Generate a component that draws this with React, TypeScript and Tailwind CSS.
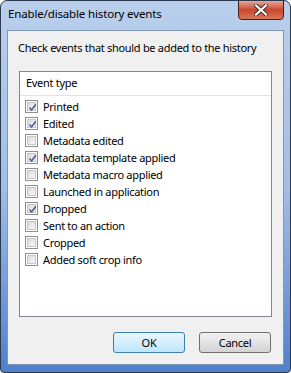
import React from "react";

const events = [
  { label: "Printed", checked: true },
  { label: "Edited", checked: true },
  { label: "Metadata edited", checked: false },
  { label: "Metadata template applied", checked: true },
  { label: "Metadata macro applied", checked: false },
  { label: "Launched in application", checked: false },
  { label: "Dropped", checked: true },
  { label: "Sent to an action", checked: false },
  { label: "Cropped", checked: false },
  { label: "Added soft crop info", checked: false },
];

function CheckBox({ checked }: { checked: boolean }) {
  return (
    <div className="w-[13px] h-[13px] border border-[#8e8f8f] bg-white p-[1px] shrink-0">
      <div className="relative w-full h-full border border-[#c6c6c6] bg-gradient-to-br from-[#dadada] to-[#f8f8f8]">
        {checked && (
          <svg className="absolute left-[0px] top-[0px]" width="9" height="9" viewBox="0 0 9 9">
            <path d="M1.5 4.5 L3.6 7 L7.8 1.2" fill="none" stroke="#4a5f97" strokeWidth="1.6" />
          </svg>
        )}
      </div>
    </div>
  );
}

export default function App() {
  return (
    <div
      className="w-[291px] h-[373px] flex flex-col border border-[#2b3a4f] rounded-t-[7px] rounded-b-[4px] bg-gradient-to-b from-[#b9cfec] via-[#a3bee6] to-[#4f80cc] text-black overflow-hidden whitespace-nowrap"
      style={{ fontFamily: '"Noto Sans", "Open Sans", sans-serif' }}
    >
      <div className="relative h-[29px] shrink-0">
        <div className="pl-[7px] pt-[5px] text-[11.5px] leading-[16px] tracking-[-0.15px]">Enable/disable history events</div>
        <div className="absolute right-[6px] top-[-1px] w-[46px] h-[20px] rounded-b-[4px] border border-[#4a1e16] bg-gradient-to-b from-[#e6a597] via-[#c8452e] to-[#d9785a] flex items-center justify-center">
          <svg width="14" height="12" viewBox="0 0 14 12">
            <path d="M2 1.5 L12 10.5 M12 1.5 L2 10.5" stroke="#3b2a2a" strokeWidth="4" strokeLinecap="square" />
            <path d="M2 1.5 L12 10.5 M12 1.5 L2 10.5" stroke="#ffffff" strokeWidth="2.2" strokeLinecap="square" />
          </svg>
        </div>
      </div>
      <div className="mx-[6px] mb-[7px] flex-1 border border-[#7f96b5] bg-[#f0f0f0] flex flex-col text-[11px] tracking-[-0.3px]">
        <div className="pl-[10px] pt-[9px] h-[40px] leading-[16px]">Check events that should be added to the history</div>
        <div className="mx-[11px] h-[246px] border border-[#828790] bg-white">
          <div className="h-[24px] border-b border-[#e2e2e2] pl-[6px] flex items-center">Event type</div>
          <div className="pt-[2px]">
            {events.map((e) => (
              <div key={e.label} className="h-[17px] flex items-center pl-[5px] gap-[5px]">
                <CheckBox checked={e.checked} />
                <span className="leading-[16px]">{e.label}</span>
              </div>
            ))}
          </div>
        </div>
        <div className="flex justify-end gap-[14px] pr-[12px] pt-[15px]">
          <button className="w-[72px] h-[21px] rounded-[3px] border border-[#3c7fb1] bg-gradient-to-b from-[#eaf6fd] to-[#bee6fd] text-[11px] leading-[16px]">OK</button>
          <button className="w-[72px] h-[21px] rounded-[3px] border border-[#707070] bg-gradient-to-b from-[#f2f2f2] to-[#d4d4d4] text-[11px] leading-[16px]">Cancel</button>
        </div>
      </div>
    </div>
  );
}
